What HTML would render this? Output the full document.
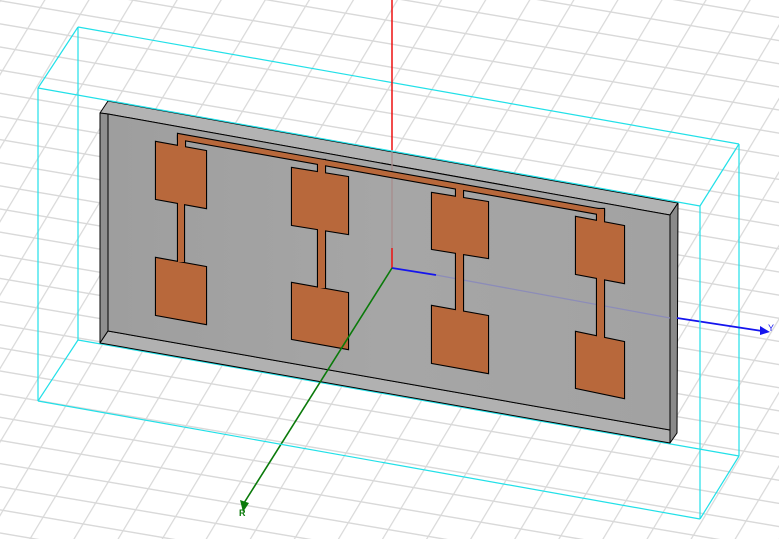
<!DOCTYPE html>
<html><head><meta charset="utf-8"><style>html,body{margin:0;padding:0;background:#fff;}svg{display:block}</style></head>
<body>
<svg width="779" height="539" viewBox="0 0 779 539" xmlns="http://www.w3.org/2000/svg">
<defs>
<pattern id="g" width="40" height="21" patternUnits="userSpaceOnUse" patternTransform="matrix(1,0.17,-0.6,1,0,0)">
<rect width="40" height="21" fill="#fff"/>
<line x1="0" y1="0.5" x2="40" y2="0.5" stroke="#d9d9d9" stroke-width="1.6"/>
<line x1="0.5" y1="0" x2="0.5" y2="21" stroke="#d9d9d9" stroke-width="1.6"/>
</pattern>
<linearGradient id="fg" x1="0" y1="0" x2="1" y2="0">
<stop offset="0" stop-color="#9e9e9e"/><stop offset="0.5" stop-color="#a6a6a6"/><stop offset="1" stop-color="#a2a2a2"/>
</linearGradient>
</defs>
<rect width="779" height="539" fill="url(#g)"/>
<!-- back box edges -->
<g stroke="#22e0e8" stroke-width="1.2" fill="none">
<line x1="78" y1="27" x2="739" y2="144"/>
<line x1="78" y1="27" x2="78" y2="340"/>
<line x1="78" y1="340" x2="739" y2="456"/>
<line x1="739" y1="144" x2="739" y2="456"/>
<line x1="38" y1="88" x2="78" y2="27"/>
<line x1="38" y1="401" x2="78" y2="340"/>
<line x1="700" y1="206" x2="739" y2="144"/>
<line x1="700" y1="519" x2="739" y2="456"/>
</g>
<!-- red axis top -->
<line x1="392" y1="0" x2="392" y2="150" stroke="#ee1111" stroke-width="1.5"/>
<!-- board -->
<g stroke="#000" stroke-width="1" stroke-linejoin="round">
<polygon points="100,113 108,101 678,203 670,215 108,114" fill="#b3b3b3"/>
<polygon points="100,113 108,114 108,331 100,343" fill="#8f8f8f"/>
<polygon points="108,331 670,430 670,443 100,343" fill="#b1b1b1"/>
<polygon points="670,215 678,203 677,433 670,443" fill="#8a8a8a"/>
<polygon points="108,114 670,215 670,430 108,331" fill="url(#fg)"/>
</g>
<!-- faded axes inside board -->
<line x1="392" y1="150" x2="392" y2="248" stroke="#a88c8c" stroke-width="1.3"/>
<line x1="392" y1="248" x2="392" y2="268" stroke="#ee1111" stroke-width="1.5"/>
<line x1="436" y1="275" x2="670" y2="318" stroke="#8c8cb8" stroke-width="1.3"/>
<line x1="392" y1="268" x2="436" y2="275" stroke="#1515ee" stroke-width="1.8"/>
<!-- copper: stroked pass -->
<g id="cu" fill="#b8683b" stroke="#000" stroke-width="2.2" stroke-linejoin="miter">
<polygon points="178,134 604,210 604,215 178,139"/>
<polygon points="178,136 185,136 185,148 178,148"/>
<polygon points="318,160 325,160 325,175 318,175"/>
<polygon points="456,185 463,185 463,200 456,200"/>
<polygon points="597,209 604,209 604,224 597,224"/>
<polygon points="156,142 206,151 206,208 156,199"/>
<polygon points="156,258 206,267 206,324 156,315"/>
<rect x="178" y="200" width="6" height="62"/>
<polygon points="292,168 348,177 348,234 292,225"/>
<polygon points="292,283 348,293 348,349 292,339"/>
<rect x="318" y="226" width="7" height="62"/>
<polygon points="432,193 488,202 488,258 432,249"/>
<polygon points="432,306 488,316 488,373 432,363"/>
<rect x="456" y="250" width="7" height="62"/>
<polygon points="576,217 624,226 624,283 576,274"/>
<polygon points="576,332 624,342 624,398 576,388"/>
<rect x="597" y="276" width="7" height="62"/>
</g>
<g fill="#b8683b">
<polygon points="178,134 604,210 604,215 178,139"/>
<polygon points="178,136 185,136 185,148 178,148"/>
<polygon points="318,160 325,160 325,175 318,175"/>
<polygon points="456,185 463,185 463,200 456,200"/>
<polygon points="597,209 604,209 604,224 597,224"/>
<polygon points="156,142 206,151 206,208 156,199"/>
<polygon points="156,258 206,267 206,324 156,315"/>
<rect x="178" y="200" width="6" height="62"/>
<polygon points="292,168 348,177 348,234 292,225"/>
<polygon points="292,283 348,293 348,349 292,339"/>
<rect x="318" y="226" width="7" height="62"/>
<polygon points="432,193 488,202 488,258 432,249"/>
<polygon points="432,306 488,316 488,373 432,363"/>
<rect x="456" y="250" width="7" height="62"/>
<polygon points="576,217 624,226 624,283 576,274"/>
<polygon points="576,332 624,342 624,398 576,388"/>
<rect x="597" y="276" width="7" height="62"/>
</g>
<!-- green axis -->
<line x1="392" y1="268" x2="244" y2="503" stroke="#0a7a0a" stroke-width="1.6"/>
<polygon points="240,500 249,503 243,512" fill="#0a7a0a"/>
<text x="239" y="516" font-family="Liberation Sans, sans-serif" font-size="9" font-weight="bold" fill="#0a7a0a">R</text>
<!-- blue axis outside -->
<line x1="677" y1="318" x2="762" y2="331" stroke="#1515ee" stroke-width="1.8"/>
<polygon points="760,326 770,332 760,335" fill="#1515ee"/>
<text x="768" y="331" font-family="Liberation Sans, sans-serif" font-size="9" fill="#1515ee">Y</text>
<!-- front box edges -->
<g stroke="#22e0e8" stroke-width="1.2" fill="none">
<line x1="38" y1="88" x2="700" y2="206"/>
<line x1="38" y1="88" x2="38" y2="401"/>
<line x1="38" y1="401" x2="700" y2="519"/>
<line x1="700" y1="206" x2="700" y2="519"/>
</g>
</svg>
</body></html>
